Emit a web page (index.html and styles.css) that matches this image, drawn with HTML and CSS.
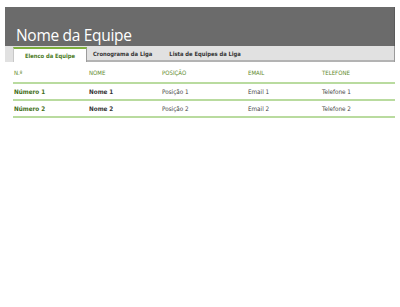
FILE: index.html
```html
<!DOCTYPE html>
<html lang="pt">
<head>
<meta charset="utf-8">
<title>Nome da Equipe</title>
<link rel="stylesheet" href="styles.css">
</head>
<body>
<div class="page">
  <header class="banner">
    <h1 class="title">Nome da Equipe</h1>
  </header>
  <nav class="tabs">
    <span class="tab active">Elenco da Equipe</span>
    <span class="tab">Cronograma da Liga</span>
    <span class="tab">Lista de Equipes da Liga</span>
    <span class="tab-fill"></span>
  </nav>
  <div class="roster">
    <div class="row head">
      <span>N.º</span><span>NOME</span><span>POSIÇÃO</span><span>EMAIL</span><span>TELEFONE</span>
    </div>
    <div class="row">
      <span class="num">Número 1</span><span class="name">Nome 1</span><span>Posição 1</span><span>Email 1</span><span>Telefone 1</span>
    </div>
    <div class="row">
      <span class="num">Número 2</span><span class="name">Nome 2</span><span>Posição 2</span><span>Email 2</span><span>Telefone 2</span>
    </div>
  </div>
</div>
</body>
</html>
```
FILE: styles.css
```css
html, body {
  margin: 0;
  padding: 0;
  background: #ffffff;
}
.page {
  padding: 7px 5px 0 5px;
  font-family: "DejaVu Sans Condensed", "DejaVu Sans", sans-serif;
}
.banner {
  height: 39px;
  background: #6b6b6b;
  border-right: 1px solid #5a5a5a;
  display: flex;
  align-items: flex-end;
  box-sizing: border-box;
}
.title {
  margin: 0 0 2px 11px;
  font-family: "Open Sans", sans-serif;
  font-weight: 400;
  font-size: 15.5px;
  letter-spacing: -0.3px;
  line-height: 18px;
  color: #ffffff;
}
.tabs {
  height: 16px;
  background: #e1e1e1;
  border-right: 1px solid #9a9a9a;
  display: flex;
  padding-left: 8px;
  box-sizing: border-box;
}
.tab {
  font-size: 5.8px;
  font-weight: bold;
  color: #333333;
  display: flex;
  align-items: center;
  padding: 1px 6px 0 6px;
  border-bottom: 2px solid #b3b3b3;
  box-sizing: border-box;
  height: 16px;
}
.tab:nth-child(2) {
  padding: 1px 11px 0 6px;
}
.tab.active {
  background: #ffffff;
  color: #4a7a1c;
  border-top: 2px solid #7fb03e;
  border-left: 1px solid #c8c8c8;
  border-right: 1px solid #9c9c9c;
  border-bottom: none;
  width: 74px;
  justify-content: center;
  margin-top: 1px;
  height: 15px;
  padding: 0;
}
.tab-fill {
  flex: 1;
  border-bottom: 2px solid #b3b3b3;
}
.roster {
  margin: 0 0 0 8px;
}
.row {
  display: grid;
  grid-template-columns: 75px 73px 86px 74px 1fr;
  align-items: center;
  height: 17px;
  border-bottom: 2px solid #b9db9f;
  box-sizing: border-box;
  font-size: 6.3px;
  color: #444444;
}
.row span {
  padding-left: 1px;
}
.row.head {
  height: 22px;
  color: #5e8a2a;
  font-size: 6px;
}
.num {
  font-weight: bold;
  color: #3f6d15;
}
.name {
  font-weight: bold;
  color: #333333;
}
```
